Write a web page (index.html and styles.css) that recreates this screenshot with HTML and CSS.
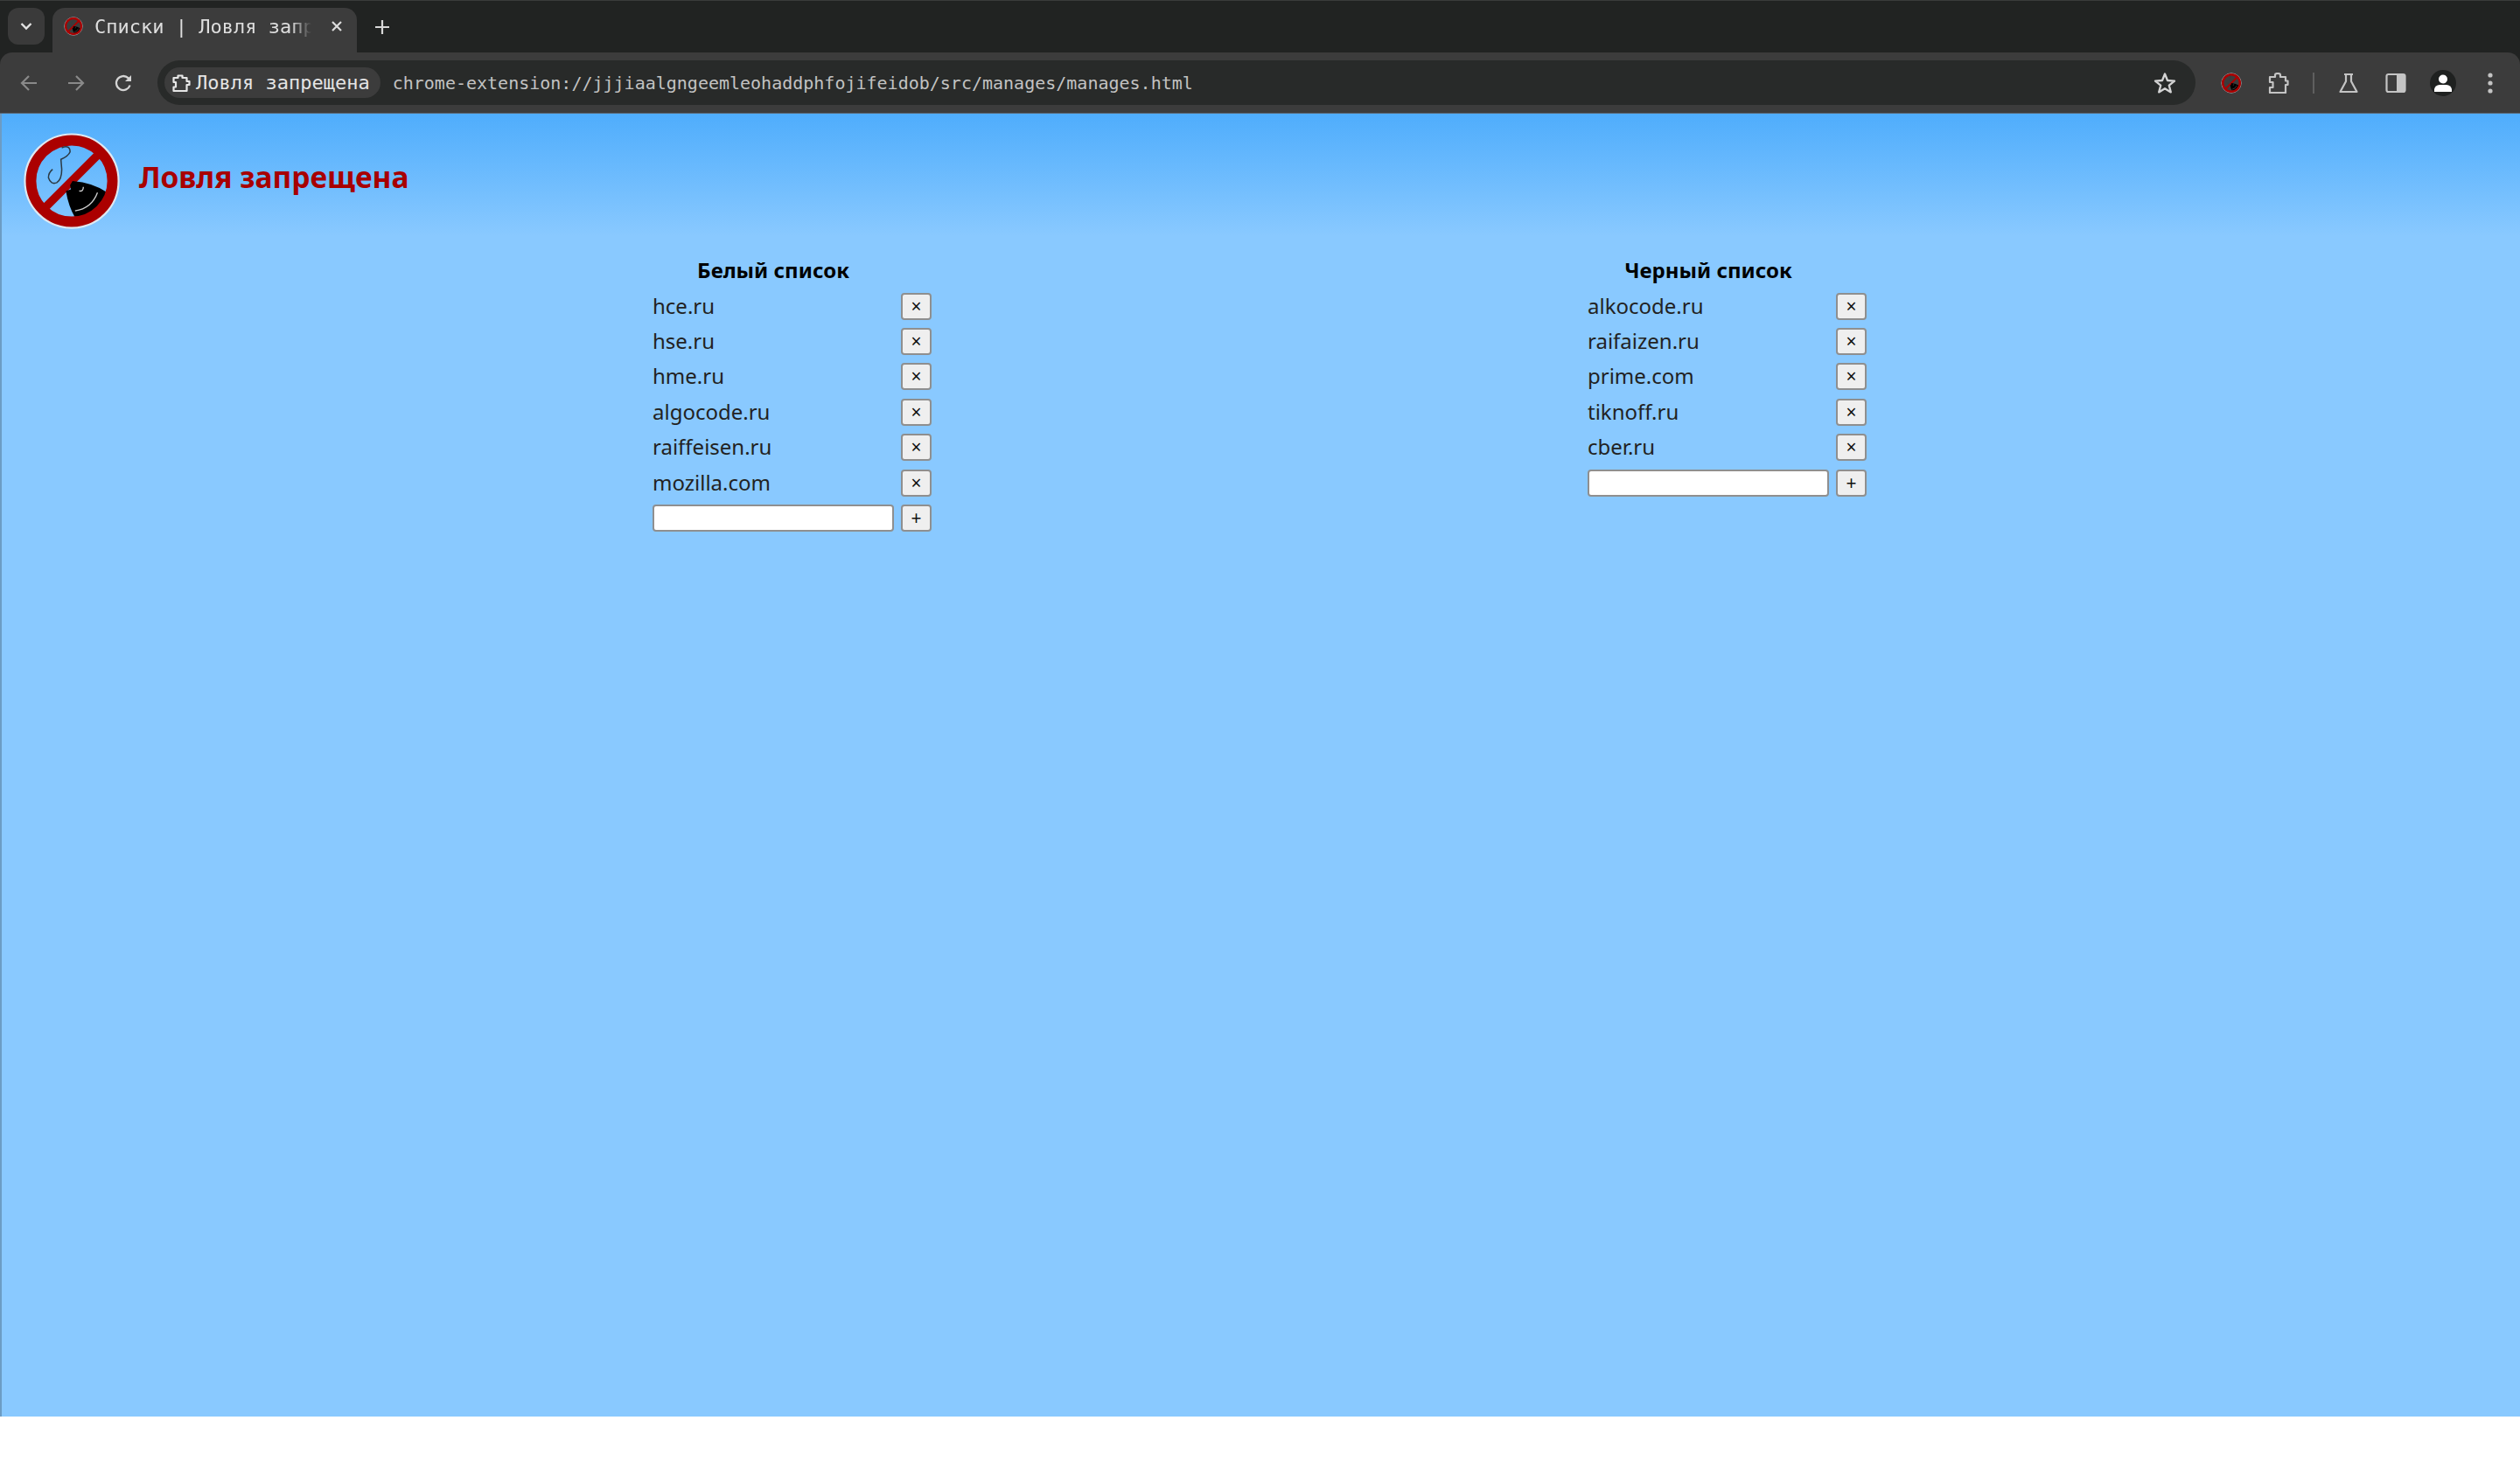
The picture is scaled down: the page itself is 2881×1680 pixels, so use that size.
FILE: index.html
```html
<!DOCTYPE html>
<html lang="ru">
<head>
  <meta charset="UTF-8">
  <title>Списки | Ловля запрещена</title>
  <link rel="stylesheet" href="styles.css">
</head>
<body>
  <svg class="defs" width="0" height="0">
    <defs>
      <symbol id="logo" viewBox="0 0 120 120">
        <path d="M25 95 L95 25" stroke="#ab0000" stroke-width="10"/>
        <path d="M61 60 L58 65 L59 70 L53 72 Q56 90 64 104 Q92 100 103 74 Q86 62 61 60 Z" fill="#000"/>
        <path d="M64 96 Q84 93 91 74" fill="none" stroke="#cfcfcf" stroke-width="1.4"/>
        <path d="M69 72 Q74 73 74 67" fill="none" stroke="#cfcfcf" stroke-width="1.4"/>
        <circle cx="60" cy="60" r="56" fill="none" stroke="#dfe9f2" stroke-width="3"/>
        <circle cx="60" cy="60" r="49" fill="none" stroke="#ab0000" stroke-width="12.5"/>
        <path d="M48 20 Q58 16 58 25 Q56 30 47 34 L48 46 Q48 58 42 62 Q35 65 32 56 Q32 50 37 46" fill="none" stroke="#2c3a44" stroke-width="1.6"/>
      </symbol>
    </defs>
  </svg>

  <div class="chrome">
    <div class="tabstrip">
      <button class="tab-search">
        <svg width="16" height="16" viewBox="0 0 16 16"><path d="M2.5 5 L8 10.5 L13.5 5" fill="none" stroke="#e3e3e3" stroke-width="2.4"/></svg>
      </button>
      <div class="tab">
        <svg class="favicon" width="22" height="22"><use href="#logo"/></svg>
        <span class="tab-title">Списки | Ловля запрещена</span>
        <svg class="tab-close" width="16" height="16" viewBox="0 0 16 16"><path d="M3 3 L13 13 M13 3 L3 13" stroke="#dcdcdc" stroke-width="2.2"/></svg>
      </div>
      <svg class="new-tab" width="18" height="18" viewBox="0 0 18 18"><path d="M9 1 V17 M1 9 H17" stroke="#d8d8d8" stroke-width="2.2"/></svg>
    </div>

    <div class="toolbar">
      <div class="tool">
        <svg width="22" height="22" viewBox="0 0 22 22"><path d="M20 11 H3 M11 3 L3 11 L11 19" fill="none" stroke="#8a8a8a" stroke-width="2.2"/></svg>
      </div>
      <div class="tool">
        <svg width="22" height="22" viewBox="0 0 22 22"><path d="M2 11 H19 M11 3 L19 11 L11 19" fill="none" stroke="#8a8a8a" stroke-width="2.2"/></svg>
      </div>
      <div class="tool">
        <svg width="22" height="22" viewBox="0 0 22 22"><path d="M18.6 13.5 A8 8 0 1 1 16.5 5.2 L19 7.5" fill="none" stroke="#d4d4d4" stroke-width="2.3"/><path d="M20 2 V9 H13 Z" fill="#d4d4d4"/></svg>
      </div>
      <div class="omnibox">
        <div class="chip">
          <svg width="22" height="22" viewBox="0 0 22 22"><path d="M2.5 5 H7.5 V2.5 H12.5 V5 H17.5 V9 H20.5 V13 H17.5 V20 H2.5 V15.5 H5 V10 H2.5 Z" fill="none" stroke="#e6e6e6" stroke-width="2.2" stroke-linejoin="round"/></svg>
          <span>Ловля запрещена</span>
        </div>
        <span class="url">chrome-extension://jjjiaalgngeemleohaddphfojifeidob/src/manages/manages.html</span>
        <svg class="star" width="26" height="26" viewBox="0 0 26 26"><path d="M13 2.5 L16 10 L24 10.6 L17.8 15.7 L19.8 23.4 L13 19.2 L6.2 23.4 L8.2 15.7 L2 10.6 L10 10 Z" fill="none" stroke="#d4d4d4" stroke-width="2.3" stroke-linejoin="round"/></svg>
      </div>
      <div class="tool tool-first">
        <svg width="24" height="24"><use href="#logo"/></svg>
      </div>
      <div class="tool">
        <svg width="24" height="24" viewBox="0 0 24 24"><path d="M2 5 H8 V2.5 Q8 1 11 1 Q14 1 14 2.5 V5 H20 V9.5 H22.5 V14 H20 V23 H2 V17 H5.5 L5.5 11 H2 Z" fill="none" stroke="#c4c4c4" stroke-width="2.2" stroke-linejoin="round"/></svg>
      </div>
      <div class="tool-sep"></div>
      <div class="tool">
        <svg width="24" height="24" viewBox="0 0 24 24"><path d="M7 2 H17 M9 2 V10 L2.5 22 H21.5 L15 10 V2" fill="none" stroke="#c4c4c4" stroke-width="2.2" stroke-linejoin="round"/></svg>
      </div>
      <div class="tool">
        <svg width="24" height="24" viewBox="0 0 24 24"><rect x="1.5" y="2" width="21" height="20" rx="2" fill="none" stroke="#c4c4c4" stroke-width="2.2"/><rect x="13" y="2" width="9.5" height="20" fill="#c4c4c4"/></svg>
      </div>
      <div class="tool">
        <div class="avatar">
          <svg width="24" height="24" viewBox="0 0 24 24"><circle cx="12" cy="7.5" r="5" fill="#fff"/><path d="M2 22 V19 Q3 14.5 8 14 H16 Q21 14.5 22 19 V22 Z" fill="#fff"/></svg>
        </div>
      </div>
      <div class="tool">
        <svg width="6" height="24" viewBox="0 0 6 24"><circle cx="3" cy="3" r="2.6" fill="#c4c4c4"/><circle cx="3" cy="12" r="2.6" fill="#c4c4c4"/><circle cx="3" cy="21" r="2.6" fill="#c4c4c4"/></svg>
      </div>
    </div>
  </div>

  <div class="page">
    <header class="brand">
      <svg class="brand-logo" width="114" height="114"><use href="#logo"/></svg>
      <h1>Ловля запрещена</h1>
    </header>

    <main class="lists">
      <section class="list">
        <h2>Белый список</h2>
        <div class="row"><span class="domain">hce.ru</span><button>×</button></div>
        <div class="row"><span class="domain">hse.ru</span><button>×</button></div>
        <div class="row"><span class="domain">hme.ru</span><button>×</button></div>
        <div class="row"><span class="domain">algocode.ru</span><button>×</button></div>
        <div class="row"><span class="domain">raiffeisen.ru</span><button>×</button></div>
        <div class="row"><span class="domain">mozilla.com</span><button>×</button></div>
        <div class="row"><input type="text"><button>+</button></div>
      </section>
      <section class="list">
        <h2>Черный список</h2>
        <div class="row"><span class="domain">alkocode.ru</span><button>×</button></div>
        <div class="row"><span class="domain">raifaizen.ru</span><button>×</button></div>
        <div class="row"><span class="domain">prime.com</span><button>×</button></div>
        <div class="row"><span class="domain">tiknoff.ru</span><button>×</button></div>
        <div class="row"><span class="domain">cber.ru</span><button>×</button></div>
        <div class="row"><input type="text"><button>+</button></div>
      </section>
    </main>
  </div>
</body>
</html>
```

FILE: styles.css
```css
body {
  margin: 0;
  height: 1680px;
  overflow: hidden;
  background-color: white;
  font-family: "Noto Sans", sans-serif;
}
.defs {
  display: block;
  height: 0;
}

/* browser chrome */
.chrome {
  background-color: #212322;
}
.tabstrip {
  display: flex;
  align-items: flex-end;
  height: 59px;
  padding-left: 9px;
  border-top: 1px solid #3a3c3b;
}
.tab-search {
  align-self: flex-start;
  display: flex;
  align-items: center;
  justify-content: center;
  width: 42px;
  height: 42px;
  margin-top: 8px;
  padding: 0;
  border: none;
  border-radius: 12px;
  background-color: #3a3a3a;
}
.tab {
  display: flex;
  align-items: center;
  width: 348px;
  height: 51px;
  margin-left: 9px;
  padding: 0 0 9px 13px;
  box-sizing: border-box;
  border-radius: 14px 14px 0 0;
  background-color: #3c3c3c;
}
.favicon {
  flex: none;
  width: 22px;
  height: 22px;
}
.tab-title {
  flex: none;
  width: 250px;
  margin-left: 13px;
  overflow: hidden;
  white-space: nowrap;
  font-family: "DejaVu Sans Mono", monospace;
  font-size: 22px;
  color: #dedede;
  -webkit-mask-image: linear-gradient(to right, black 225px, transparent 248px);
}
.tab-close {
  flex: none;
  margin-left: 19px;
}
.new-tab {
  align-self: flex-start;
  margin: 21px 0 0 20px;
}
.toolbar {
  display: flex;
  align-items: center;
  height: 70px;
  padding: 0 7px 0 6px;
  box-sizing: border-box;
  border-radius: 14px 14px 0 0;
  background-color: #3c3c3c;
  border-bottom: 1px solid #5a6672;
}
.tool {
  flex: none;
  display: flex;
  align-items: center;
  justify-content: center;
  width: 54px;
}
.tool-first {
  margin-left: 14px;
}
.tool-sep {
  flex: none;
  width: 2px;
  height: 24px;
  margin: 0 12px;
  background-color: #5f5f5f;
}
.avatar {
  display: flex;
  align-items: center;
  justify-content: center;
  width: 30px;
  height: 30px;
  border-radius: 50%;
  background-color: #1f2120;
}
.omnibox {
  flex: 1;
  display: flex;
  align-items: center;
  height: 51px;
  margin-left: 12px;
  padding: 0 22px 0 8px;
  box-sizing: border-box;
  border-radius: 26px;
  background-color: #282a29;
}
.chip {
  display: flex;
  align-items: center;
  gap: 6px;
  height: 35px;
  padding: 0 12px 0 8px;
  border-radius: 18px;
  background-color: #3c3c3c;
  font-family: "DejaVu Sans Mono", monospace;
  font-size: 22px;
  color: #e4e4e4;
}
.url {
  flex: 1;
  margin-left: 14px;
  font-family: "DejaVu Sans Mono", monospace;
  font-size: 20px;
  color: #c2c2c2;
}

/* page */
.page {
  height: 1490px;
  box-sizing: border-box;
  border-left: 2px solid #6c9cc4;
  background: linear-gradient(#4fadfc, #89c9ff 140px);
}
.brand {
  display: flex;
  align-items: center;
  gap: 20px;
  padding: 20px 0 0 23px;
}
.brand-logo {
  flex: none;
}
h1 {
  margin: 0 0 10px;
  font-size: 33.5px;
  font-weight: bold;
  color: #a80000;
}
.lists {
  display: flex;
  justify-content: center;
  gap: 750px;
  margin-top: 26px;
  padding-right: 3px;
}
.list {
  width: 319px;
}
h2 {
  width: 276px;
  height: 40px;
  margin: 0;
  font-size: 24px;
  line-height: 37px;
  font-weight: bold;
  text-align: center;
  color: black;
}
.row {
  display: flex;
  align-items: center;
  justify-content: space-between;
  height: 40.4px;
}
.domain {
  padding-bottom: 2px;
  font-size: 24px;
  color: #222;
}
button {
  width: 35px;
  height: 31px;
  padding: 0;
  box-sizing: border-box;
  border: 2px solid #8f8f8f;
  border-radius: 4px;
  background-color: #efefef;
  font-family: "Noto Sans", sans-serif;
  font-size: 21px;
  line-height: 1;
  color: #111;
}
input {
  width: 276px;
  height: 31px;
  padding: 0;
  box-sizing: border-box;
  border: 2px solid #8f8f8f;
  border-radius: 4px;
  background-color: white;
}
```
